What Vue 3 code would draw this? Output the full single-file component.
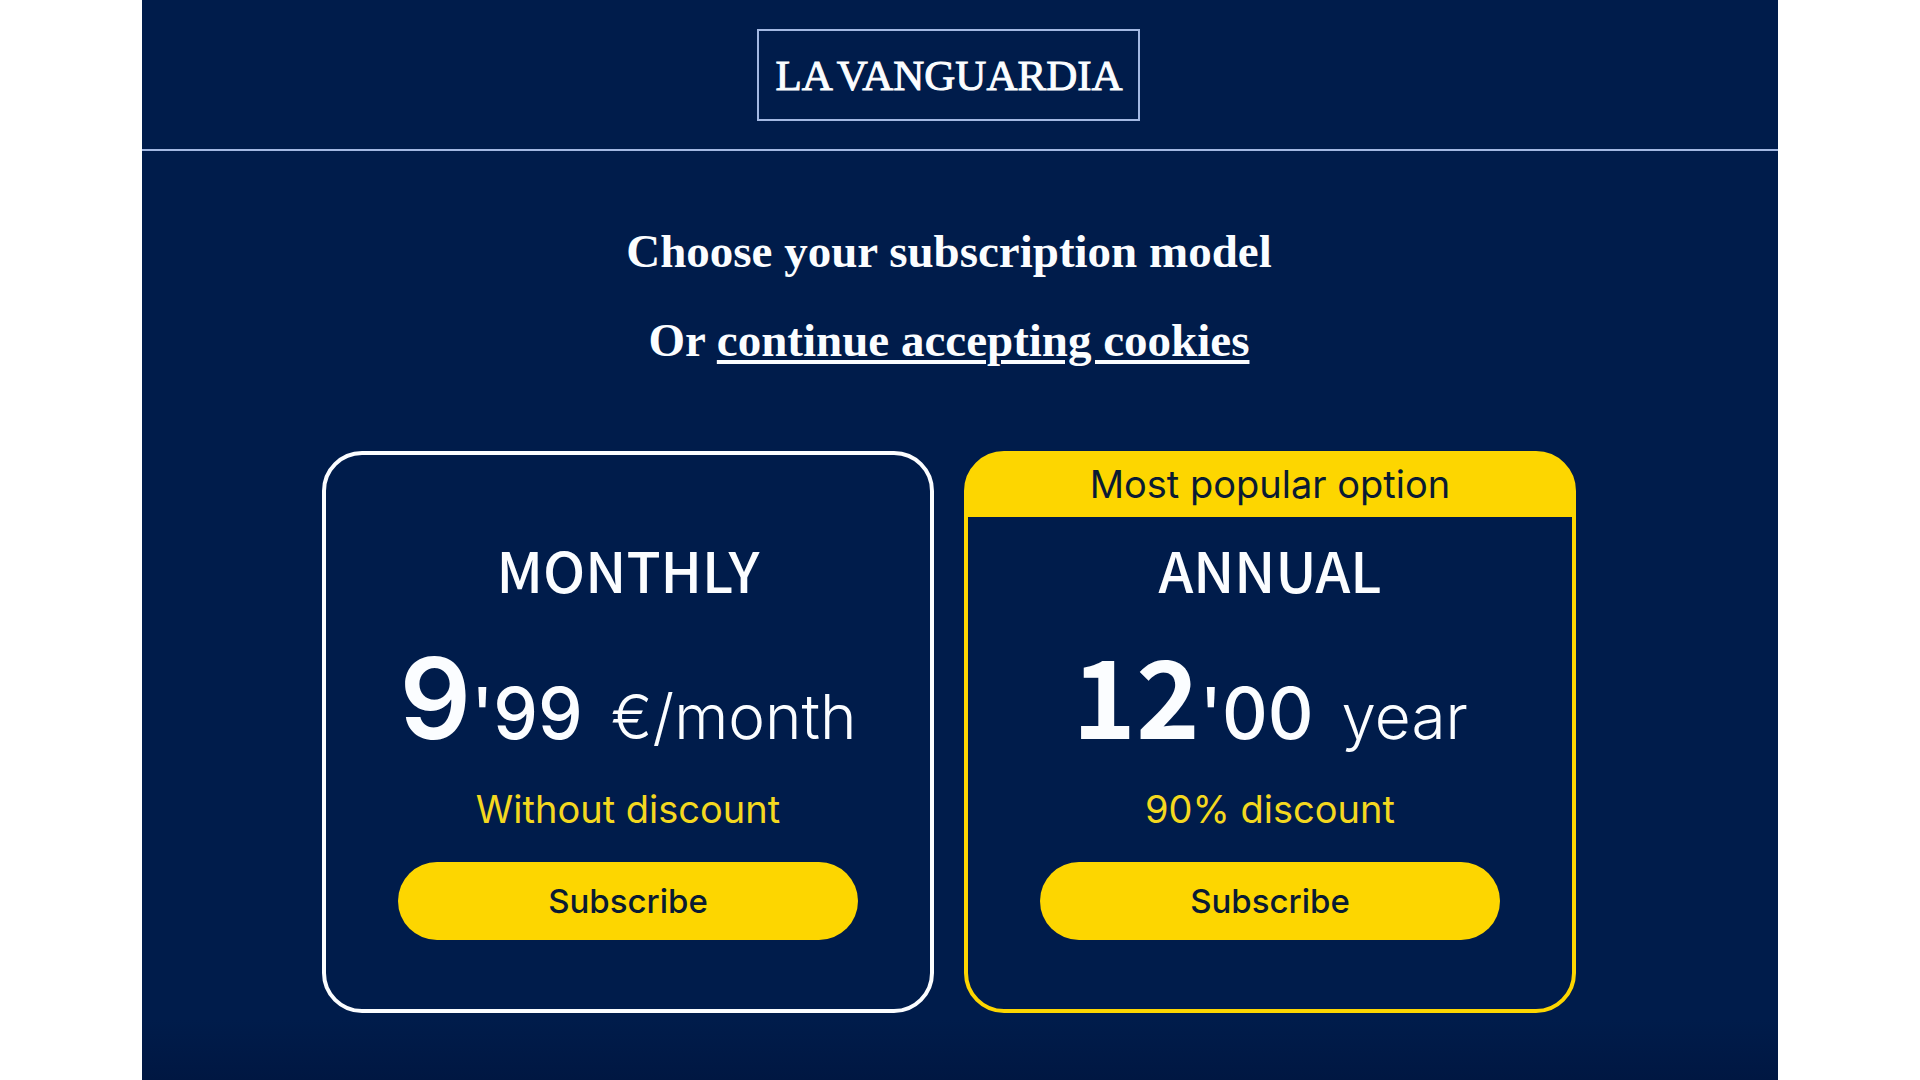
<script setup>
const plans = [
  { id: 'monthly', name: 'MONTHLY', whole: '9', cents: "'99", unit: '€/month', note: 'Without discount' },
  { id: 'annual', name: 'ANNUAL', whole: '12', cents: "'00", unit: 'year', note: '90% discount', badge: 'Most popular option' },
]
</script>

<template>
  <div class="page">
    <header class="header">
      <a class="logo" href="#"><span>LA</span> <span>VANGUARDIA</span></a>
    </header>
    <main class="main">
      <h1 class="title">Choose your subscription model</h1>
      <p class="title">Or <a href="#">continue accepting cookies</a></p>
      <div class="plans">
        <section
          v-for="plan in plans"
          :key="plan.id"
          class="plan"
          :class="{ featured: plan.badge }"
          :aria-labelledby="plan.id"
        >
          <div class="banner">{{ plan.badge }}</div>
          <h2 :id="plan.id" class="name">{{ plan.name }}</h2>
          <p class="price">
            <span class="amount"><span class="whole">{{ plan.whole }}</span><span class="cents">{{ plan.cents }}</span></span>
            <span class="unit">{{ plan.unit }}</span>
          </p>
          <p class="note">{{ plan.note }}</p>
          <button type="button" class="subscribe">Subscribe</button>
        </section>
      </div>
    </main>
  </div>
</template>

<style>
body {
  margin: 0;
  background: #fff;
}
</style>

<style scoped>
.page {
  box-sizing: border-box;
  width: 85.2%;
  min-height: 100vh;
  margin: 0 auto;
  background: linear-gradient(to top, #001742, #001c4b 60px);
  color: #fbfdff;
  font-family: Inter, "Liberation Sans", sans-serif;
}

.header {
  display: flex;
  justify-content: center;
  padding: 29px 22px 28px 0;
  border-bottom: 2px solid #a3b8e2;
}

.logo {
  box-sizing: border-box;
  display: flex;
  align-items: center;
  justify-content: center;
  gap: 4px;
  width: 383px;
  height: 92px;
  border: 2px solid #a3b8e2;
  color: inherit;
  font: 43px/1 "Liberation Serif", serif;
  text-decoration: none;
  -webkit-text-stroke: 1px currentColor;
}

.main {
  padding: 56px 22px 66px 0;
}

.title {
  margin: 0;
  font: bold 47px/89px "Liberation Serif", serif;
  text-align: center;
}

.title a {
  color: inherit;
  text-decoration-thickness: 4px;
  text-underline-offset: 4px;
}

.plans {
  display: grid;
  grid-template-columns: 1fr 1fr;
  gap: 30px;
  max-width: 1254px;
  margin: 66px auto 0;
}

.plan {
  box-sizing: border-box;
  display: flex;
  flex-direction: column;
  align-items: center;
  padding-bottom: 69px;
  border: 4px solid #fbfdff;
  border-radius: 40px;
}

.featured {
  border-color: #fdd600;
  background: linear-gradient(#fdd600 66px, transparent 66px) border-box;
}

.banner {
  height: 62px;
  color: #0a1b33;
  font-size: 38px;
  line-height: 59px;
}

.name {
  margin: 22px 0 0;
  font: 500 56px/60px "Noto Sans CJK SC", sans-serif;
}

.price {
  display: flex;
  align-items: baseline;
  gap: 28px;
  margin: 36px 0 0;
  line-height: 60px;
}

.amount {
  font: 500 112px/110px "Noto Sans CJK SC", sans-serif;
}

.whole {
  font-family: Inter, "Liberation Sans", sans-serif;
  font-weight: 600;
  line-height: 60px;
}

.featured .whole {
  font-family: "Noto Sans CJK SC", sans-serif;
  font-size: 108px;
}

.cents {
  font-family: Inter, "Liberation Sans", sans-serif;
  font-size: 71px;
  line-height: 60px;
}

.unit {
  font-size: 62px;
  font-weight: 300;
}

.note {
  margin: 32px 0 0;
  color: #f4d81f;
  font-size: 38px;
  line-height: 60px;
}

.subscribe {
  width: 460px;
  max-width: 90%;
  height: 78px;
  margin: 23px 0 0;
  padding: 0;
  border: 0;
  border-radius: 39px;
  background: #fdd600;
  color: #0a1b33;
  font: 500 33px/1 Inter, "Liberation Sans", sans-serif;
}
</style>
